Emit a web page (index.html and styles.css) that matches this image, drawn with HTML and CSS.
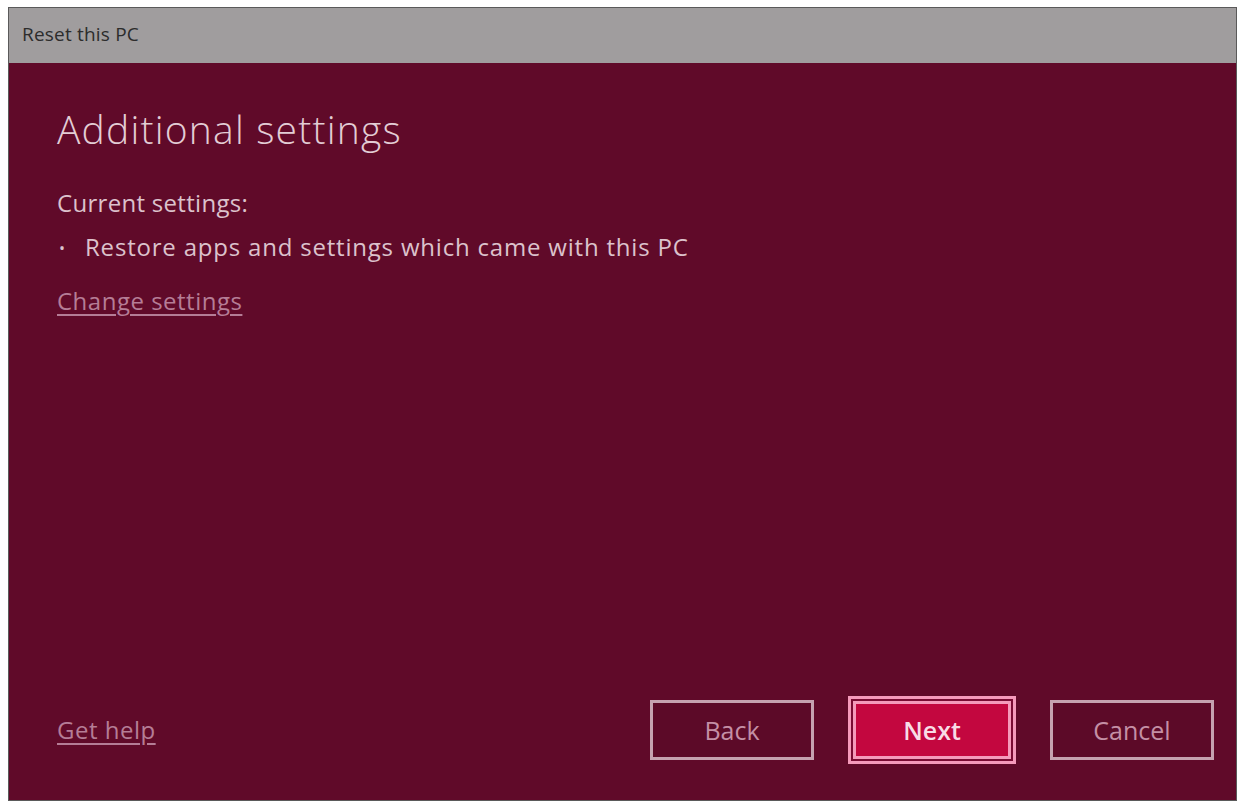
FILE: index.html
```html
<!DOCTYPE html>
<html>
<head>
	<meta charset="utf-8">
	<title>Reset this PC</title>
	<link rel="stylesheet" href="styles.css">
</head>
<body>

<div class="window">
	<div class="titlebar">Reset this PC</div>
	<div class="content">
		<h1 class="heading">Additional settings</h1>
		<p class="label">Current settings:</p>
		<ul class="current">
			<li>Restore apps and settings which came with this PC</li>
		</ul>
		<a class="link change">Change settings</a>
		<div class="footer">
			<a class="link help">Get help</a>
			<div class="buttons">
				<button class="btn">Back</button>
				<button class="btn primary">Next</button>
				<button class="btn">Cancel</button>
			</div>
		</div>
	</div>
</div>

</body>
</html>
```

FILE: styles.css
```css
* {
	margin: 0;
	padding: 0;
	box-sizing: border-box;
}
body {
	background: #fff;
	font-family: "Open Sans", "Noto Sans", sans-serif;
}
.window {
	margin: 7px 3px 0 8px;
	height: 794px;
	border: 1px solid #5a5a5a;
	background: #600a29;
	display: flex;
	flex-direction: column;
}
.titlebar {
	height: 55px;
	background: #a09d9e;
	color: #2c2c2c;
	font-size: 19px;
	padding: 13px 0 0 13px;
	letter-spacing: 0.2px;
}
.content {
	flex: 1;
	display: flex;
	flex-direction: column;
	padding: 0 22px 0 48px;
	color: #e3cdd5;
}
.heading {
	font-weight: 300;
	font-size: 39px;
	margin-top: 40px;
	line-height: 52px;
	letter-spacing: 1.2px;
}
.label {
	font-size: 24px;
	margin-top: 32px;
	line-height: 32px;
	letter-spacing: 0.3px;
	color: #dcc2cc;
}
.current {
	list-style: none;
	margin-top: 12px;
	font-size: 24px;
	line-height: 32px;
	letter-spacing: 0.8px;
	color: #dcc2cc;
}
.current li::before {
	content: "\2022";
	display: inline-block;
	width: 26px;
	font-size: 16px;
	padding-left: 2px;
	vertical-align: 2px;
}
.link {
	color: #b57d96;
	text-decoration: underline;
	text-underline-offset: 4px;
	font-size: 24px;
	line-height: 32px;
	letter-spacing: 0.5px;
	cursor: pointer;
}
.change {
	margin-top: 21px;
	align-self: flex-start;
}
.footer {
	margin-top: auto;
	display: flex;
	align-items: center;
	justify-content: space-between;
	padding-bottom: 36px;
}
.buttons {
	display: flex;
	align-items: center;
	gap: 34px;
}
.btn {
	width: 164px;
	height: 60px;
	background: #5c0a28;
	border: 3px solid #c6a2b0;
	color: #c48fa5;
	font-family: inherit;
	font-size: 25px;
}
.primary {
	width: 168px;
	height: 68px;
	background: #c3073f;
	border: 3px solid #f59abb;
	box-shadow: inset 0 0 0 2px #7a0c33, inset 0 0 0 5px #f59abb;
	color: #f8dce6;
	font-weight: 600;
}
```
